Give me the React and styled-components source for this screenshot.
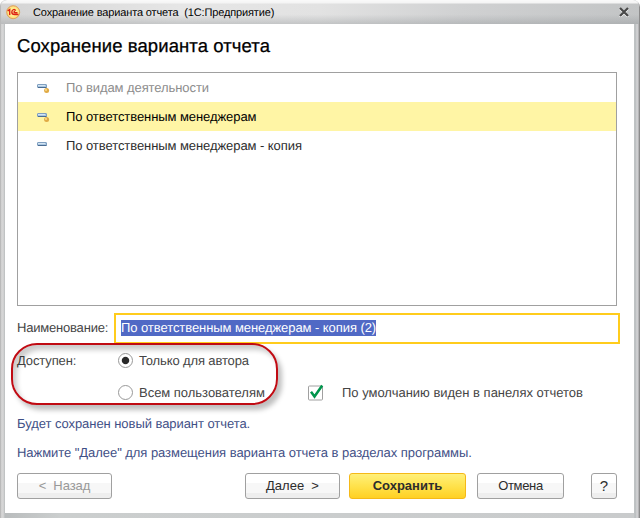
import React from "react";
import styled, { createGlobalStyle } from "styled-components";

const GlobalStyle = createGlobalStyle`
  * { box-sizing: border-box; }
  body { margin: 0; background: #fff; font-family: "Liberation Sans", Arial, sans-serif; overflow: hidden; text-rendering: geometricPrecision; }
`;

const Window = styled.main`
  width: 640px;
  height: 518px;
  padding: 0 6px 5px 5px;
  display: flex;
  flex-direction: column;
  border-radius: 6px 7px 0 0;
  background: linear-gradient(90deg, #a5a5a5 0, #cfcfcf 1px, #d8d8d8 3px, #b9bcbd 5px, #cbcece 60px, #c9cbcc 634px, #b5babb 635px, #d4d4d6 637px, #c9c9cb 638px, #777 640px);
`;
const TitleBar = styled.header`
  height: 24px;
  flex: none;
  margin: 0 -5px 0 -4px;
  padding: 0 10px 0 4px;
  display: flex;
  align-items: center;
  border-radius: 6px 6px 0 0;
  background:
    linear-gradient(#fafafa 0, #f4f4f4 3px, transparent 4px),
    linear-gradient(transparent 60%, rgba(130, 135, 138, 0.32)),
    linear-gradient(98deg, #d4d4d4 0, #e6e6e6 28%, #e2e2e2 50%, #d0d1d2 72%, #c2c4c5 100%);
`;
const WindowTitle = styled.div`
  flex: 1;
  margin-left: 12px;
  font-size: 11px;
  line-height: 24px;
  letter-spacing: -0.14px;
  white-space: pre;
  color: #000;
  padding-top: 1px;
`;
const Body = styled.section`
  flex: 1;
  background: #fff;
  padding: 0 14px 0 12px;
  display: flex;
  flex-direction: column;
`;
const Heading = styled.h1`
  margin: 11px 0 0;
  height: 37px;
  font-size: 18.5px;
  font-weight: 400;
  line-height: 22px;
  letter-spacing: 0.09px;
  color: #000;
  -webkit-text-stroke: 0.25px #000;
  white-space: nowrap;
`;
const Label = styled.span`
  font-size: 13px;
  line-height: 16px;
  white-space: pre;
  letter-spacing: ${(p) => p.$ls || 0}px;
  color: ${(p) => p.$color || "#444"};
`;
const List = styled.div`
  width: 600px;
  height: 234px;
  flex: none;
  border: 1px solid #a0a0a0;
`;
const Row = styled.div`
  height: 29px;
  display: flex;
  align-items: center;
  padding-left: 18px;
  gap: 15px;
  background: ${(p) => (p.$selected ? "#fff5a5" : "transparent")};
`;
const FieldRow = styled.div`
  display: flex;
  align-items: center;
  height: 32px;
  margin-top: 6px;
`;
const FieldLabel = styled.div`
  width: 97px;
  flex: none;
  display: flex;
`;
const Field = styled.div`
  width: 506px;
  flex: none;
  height: 31px;
  border: 2px solid #ffcc1c;
  padding-left: 5px;
  display: flex;
  align-items: center;
`;
const Selection = styled.div`
  height: 16px;
  width: 255px;
  display: flex;
  align-items: center;
  background: #5069c5;
`;
const Options = styled.div`
  position: relative;
  height: 65px;
  flex: none;
  display: grid;
  grid-template-columns: 101px 189px 1fr;
  grid-template-rows: 33px 31px;
  align-items: center;
`;
const Option = styled.div`
  display: flex;
  align-items: center;
  gap: ${(p) => p.$gap || 6}px;
  grid-column: ${(p) => p.$col};
`;
const Radio = styled.span`
  width: 15px;
  height: 15px;
  flex: none;
  border: 1px solid #999;
  border-radius: 50%;
  background: ${(p) => (p.$on ? "radial-gradient(circle, #292929 3.2px, #fff 4.2px)" : "#fff")};
`;
const Callout = styled.div`
  position: absolute;
  left: -6px;
  top: -1px;
  width: 267px;
  height: 62px;
  border: 2px solid #c00b13;
  border-radius: 26px;
  box-shadow: 4px 5px 5px rgba(0, 0, 0, 0.25), inset 4px 5px 5px rgba(0, 0, 0, 0.2);
`;
const Note = styled.p`
  margin: 0;
  height: 29px;
  display: flex;
  align-items: center;
`;
const Footer = styled.footer`
  display: flex;
  margin-top: 6px;
`;
const Button = styled.button`
  width: ${(p) => p.$w}px;
  height: 26px;
  margin: 0 0 0 ${(p) => p.$gap || 0}px;
  padding: 0;
  border: 1px solid ${(p) => (p.$primary ? "#f5b918" : "#a0a0a0")};
  border-radius: 3px;
  background: ${(p) =>
    p.$primary
      ? "linear-gradient(#fff07a, #ffe24c 50%, #ffd023)"
      : "linear-gradient(#fff 0 9px, #f7f7f7 9px 19px, #eee 19px)"};
  font-family: inherit;
  font-size: ${(p) => p.$size || 13}px;
  font-weight: ${(p) => (p.$primary ? 700 : 400)};
  line-height: 16px;
  letter-spacing: ${(p) => p.$ls || 0}px;
  white-space: pre;
  color: ${(p) => (p.disabled ? "#999" : "#2d2d2d")};
`;

const Logo = () => (
  <svg width="16" height="16" viewBox="0 0 16 16" fill="none">
    <defs>
      <radialGradient id="logoFill">
        <stop offset="0.3" stopColor="#fff9a8" />
        <stop offset="0.85" stopColor="#ffe27a" />
        <stop offset="1" stopColor="#f3bd68" />
      </radialGradient>
    </defs>
    <circle cx="8.2" cy="8.2" r="6.5" fill="url(#logoFill)" stroke="#dfa15c" />
    <path d="M2.7 6.8 4.7 5.5v5.4M10.6 6.8C10 5 7 5 6.8 8c0 2 1.2 2.5 2.8 2.5H13.5M10 7.8C8.8 7.3 8.8 8.7 9.8 8.7H12.5" stroke="#dd2414" strokeWidth="1.4" />
  </svg>
);
const CloseIcon = () => (
  <svg width="10" height="10" viewBox="0 0 10 10" fill="none">
    <path d="m1 2 8 8M9 2l-8 8" stroke="#fff" strokeWidth="2" />
    <path d="m1 1 8 8M9 1 1 9" stroke="#484848" strokeWidth="2.2" />
  </svg>
);
const ReportIcon = ({ dot }) => (
  <svg width="15" height="15" viewBox="0 0 15 15">
    <rect x="1.5" y="4.5" width="9" height="3" rx="0.5" fill="#a9c6e0" stroke="#7f9fc0" />
    <path d="M2 7.5h8.5" stroke="#4a6c92" />
    <path d="M2 5.5h7" stroke="#d5e5f3" />
    {dot && (
      <>
        <circle cx="10.6" cy="10.5" r="2.5" fill="#e0aa45" />
        <circle cx="10" cy="9.9" r="1.1" fill="#f8d888" />
      </>
    )}
  </svg>
);
const Check = () => (
  <svg width="18" height="17" viewBox="0 0 18 17" fill="none">
    <rect x="1.5" y="2" width="14" height="14" rx="1" fill="#fff" stroke="#a0a0a0" />
    <path d="M4 7.8 7.5 12.5 15.2 1.5" stroke="#00954c" strokeWidth="2.5" />
  </svg>
);

const reports = [
  { name: "По видам деятельности", dot: true, color: "#8c8c8c", ls: -0.08 },
  { name: "По ответственным менеджерам", dot: true, color: "#000", ls: -0.07, selected: true },
  { name: "По ответственным менеджерам - копия", color: "#2d2d2d", ls: -0.07 },
];

export default function App() {
  return (
    <>
      <GlobalStyle />
      <Window>
        <TitleBar>
          <Logo />
          <WindowTitle>Сохранение варианта отчета  (1С:Предприятие)</WindowTitle>
          <CloseIcon />
        </TitleBar>
        <Body>
          <Heading>Сохранение варианта отчета</Heading>
          <List>
            {reports.map((r) => (
              <Row key={r.name} $selected={r.selected}>
                <ReportIcon dot={r.dot} />
                <Label $color={r.color} $ls={r.ls}>{r.name}</Label>
              </Row>
            ))}
          </List>
          <FieldRow>
            <FieldLabel><Label $ls={-0.2}>Наименование:</Label></FieldLabel>
            <Field>
              <Selection><Label $color="#fff" $ls={-0.07}>По ответственным менеджерам - копия (2)</Label></Selection>
            </Field>
          </FieldRow>
          <Options>
            <Label $ls={-0.12}>Доступен:</Label>
            <Option $col="2"><Radio $on /><Label $ls={-0.13}>Только для автора</Label></Option>
            <Option $col="2"><Radio /><Label $ls={-0.02}>Всем пользователям</Label></Option>
            <Option $col="3" $gap={17}><Check /><Label $ls={-0.01}>По умолчанию виден в панелях отчетов</Label></Option>
            <Callout />
          </Options>
          <Note><Label $color="#3f4f86" $ls={-0.06}>Будет сохранен новый вариант отчета.</Label></Note>
          <Note><Label $color="#3f4f86" $ls={-0.05}>Нажмите "Далее" для размещения варианта отчета в разделах программы.</Label></Note>
          <Footer>
            <Button $w={95} $ls={-0.1} disabled>{"<  Назад"}</Button>
            <Button $w={95} $gap={133}>{"Далее  >"}</Button>
            <Button $w={117} $gap={9} $primary>Сохранить</Button>
            <Button $w={87} $gap={11} $ls={-0.35}>Отмена</Button>
            <Button $w={26} $gap={27} $size={15}>?</Button>
          </Footer>
        </Body>
      </Window>
    </>
  );
}
